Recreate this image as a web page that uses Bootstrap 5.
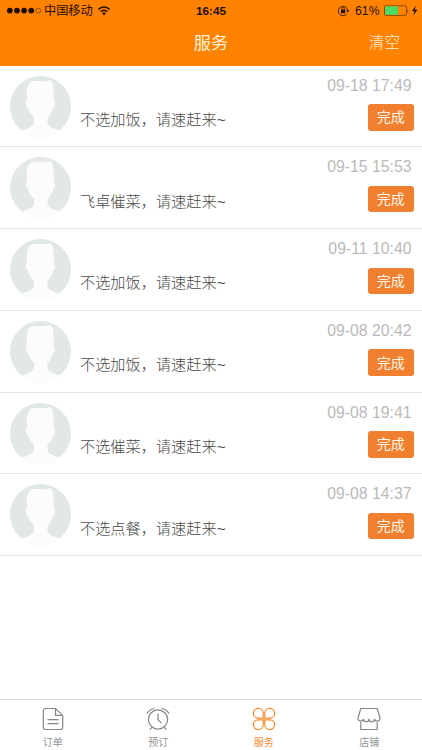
<!DOCTYPE html>
<html lang="zh-CN">
<head>
<meta charset="utf-8">
<meta name="viewport" content="width=device-width, initial-scale=1">
<title>服务</title>
<link href="https://cdn.jsdelivr.net/npm/bootstrap@5.3.0/dist/css/bootstrap.min.css" rel="stylesheet">
<style>
body{font-family:"Liberation Sans","Noto Sans CJK SC",sans-serif;height:750px;overflow:hidden;background:#fff}
svg{display:block;flex:none}
.top-area{background:#ff8200;height:65.5px}
.status-bar{height:22px;font-size:12.2px;line-height:22px;color:#1f0e00}
.status-bar>div{flex:1 1 0}
.clock{font-weight:700;font-size:11.8px}
.title-bar{height:43.5px;color:#fff3dc}
.title-bar>*{flex:1 1 0}
.page-title{font-size:17.2px;font-weight:400;line-height:43px}
.clear-link{font-size:15.6px;font-weight:300;color:#fff3dc;line-height:42px}
.clear-link span{margin-right:22px}
.notice{height:81.8px;padding:10px 8.5px 0 10.2px;border-bottom:1px solid #e6e6e6;border-radius:0}
.notice-text{font-size:15.2px;line-height:20px;font-weight:300;color:#484848;padding-top:34.4px;margin-left:8.800px}
.notice-time{font-size:15.8px;line-height:20px;color:#bababa;padding-right:2px;white-space:nowrap}
.done-btn{background:#f08030;color:#fff5e6;font-size:14px;line-height:20px;width:45.5px;height:26.5px;border-radius:3px;padding:2px 0;margin-top:8.5px;border:0}
.tab-bar{height:51px;border-top:1px solid #dcdcdc;font-size:10px;line-height:14px;color:#929292}
.tab-item{flex:1 1 0;padding-top:7px;color:#929292;text-decoration:none}
.tab-item.active{color:#f58a2c}
.tab-item span{margin-top:5px}
</style>
<script src="https://cdn.jsdelivr.net/npm/bootstrap@5.3.0/dist/js/bootstrap.bundle.min.js"></script>
</head>
<body class="d-flex flex-column">
<svg width="0" height="0" class="position-absolute" aria-hidden="true">
<defs>
<clipPath id="round"><circle cx="30.5" cy="30.5" r="30.5"/></clipPath>
<symbol id="person" viewBox="0 0 61 61">
<g clip-path="url(#round)">
<rect width="61" height="61" fill="#e1e8e6"/>
<path d="M17 21C16 14 18 6.500 22 5.300C28 4 34 6.500 40 4C43 6 43.500 9 43.500 14L44 26C46 26 45 31 43.300 32C42 37 39.500 39.500 37.500 41.500V47C38 51 42 51.500 49.500 54.700L56 62H6L12 54.700C19 51.500 23.500 51 24 47V41.500C21.500 39.500 19 36 18 32C16 31 15 26 16.500 25Z" fill="#fcfcfc"/>
</g>
</symbol>
</defs>
</svg>
<header class="top-area flex-shrink-0">
<div class="status-bar d-flex">
<div class="d-flex align-items-center">
<svg width="44" height="22" fill="#1f0e00"><circle cx="9.800" cy="10.600" r="2.900"/><circle cx="17" cy="10.600" r="2.900"/><circle cx="24.100" cy="10.600" r="2.900"/><circle cx="31.200" cy="10.600" r="2.900"/><circle cx="38.300" cy="10.600" r="2.500" fill="none" stroke="#6b3600" stroke-width=".7"/></svg>
<span>中国移动</span>
<svg width="14" height="22" viewBox="0 0 14 22" class="ms-1" fill="none" stroke="#1f0e00" stroke-width="1.700"><path d="M1.400 9.300a8 8 0 0 1 11.200 0M3.700 11.700a4.800 4.800 0 0 1 6.600 0"/><path d="M7 15.200L5 13.200a2.800 2.800 0 0 1 4 0z" fill="#1f0e00" stroke="none"/></svg>
</div>
<span class="clock">16:45</span>
<div class="d-flex align-items-center justify-content-end">
<svg width="14" height="22" viewBox="0 0 14 22" fill="none" stroke="#3a1c00"><path d="M9.400 14.300A4.700 4.700 0 1 1 10.700 10.500" stroke-width="1"/><path d="M9 10.200h3.500L10.800 12.500z" fill="#3a1c00" stroke="none"/><rect x="4" y="9.800" width="4.200" height="3.500" fill="#1f0e00" stroke="none"/><path d="M4.800 10V8.800a1.300 1.300 0 0 1 2.600 0V10" stroke-width=".8"/></svg>
<span class="ms-1">61%</span>
<svg width="42.500" height="22" viewBox="0 0 42.500 22"><rect x="4.500" y="5.800" width="22" height="9.600" rx="1.200" fill="none" stroke="#6b4200" stroke-width=".8"/><rect x="5.100" y="6.400" width="12.800" height="8.400" fill="#4cdb64"/><path d="M27.500 9.200q1.800 1.400 0 3z" fill="#3a1c00"/><path d="M35.700 5.800L32 11h2.400l-1.100 4.200L37.500 9.800h-2.600z" fill="#1f0e00"/></svg>
</div>
</div>
<nav class="title-bar d-flex">
<span></span>
<h1 class="page-title text-center m-0">服务</h1>
<a class="clear-link text-end text-decoration-none" href="#"><span>清空</span></a>
</nav>
</header>
<main class="flex-grow-1">
<div class="notice d-flex align-items-start"><svg width="61" height="61"><use href="#person"/></svg><div class="notice-text flex-grow-1">不选加饭，请速赶来~</div><div class="d-flex flex-column align-items-end"><time class="notice-time">09-18 17:49</time><button class="done-btn btn">完成</button></div></div>
<div class="notice d-flex align-items-start"><svg width="61" height="61"><use href="#person"/></svg><div class="notice-text flex-grow-1">飞卓催菜，请速赶来~</div><div class="d-flex flex-column align-items-end"><time class="notice-time">09-15 15:53</time><button class="done-btn btn">完成</button></div></div>
<div class="notice d-flex align-items-start"><svg width="61" height="61"><use href="#person"/></svg><div class="notice-text flex-grow-1">不选加饭，请速赶来~</div><div class="d-flex flex-column align-items-end"><time class="notice-time">09-11 10:40</time><button class="done-btn btn">完成</button></div></div>
<div class="notice d-flex align-items-start"><svg width="61" height="61"><use href="#person"/></svg><div class="notice-text flex-grow-1">不选加饭，请速赶来~</div><div class="d-flex flex-column align-items-end"><time class="notice-time">09-08 20:42</time><button class="done-btn btn">完成</button></div></div>
<div class="notice d-flex align-items-start"><svg width="61" height="61"><use href="#person"/></svg><div class="notice-text flex-grow-1">不选催菜，请速赶来~</div><div class="d-flex flex-column align-items-end"><time class="notice-time">09-08 19:41</time><button class="done-btn btn">完成</button></div></div>
<div class="notice d-flex align-items-start"><svg width="61" height="61"><use href="#person"/></svg><div class="notice-text flex-grow-1">不选点餐，请速赶来~</div><div class="d-flex flex-column align-items-end"><time class="notice-time">09-08 14:37</time><button class="done-btn btn">完成</button></div></div>
</main>
<nav class="tab-bar d-flex flex-shrink-0">
<a class="tab-item d-flex flex-column align-items-center" href="#"><svg width="24" height="24" viewBox="0 0 24 24" fill="none" stroke="#868686" stroke-width="1.200"><path d="M14.500 1.500H4.500a2.200 2.200 0 0 0-2.200 2.200v16.600a2.200 2.200 0 0 0 2.200 2.200h15a2.200 2.200 0 0 0 2.200-2.200V8.400zV8.400H21.700M6.500 12.700h11M6.500 16.700h11"/></svg><span>订单</span></a>
<a class="tab-item d-flex flex-column align-items-center" href="#"><svg width="24" height="24" viewBox="0 0 24 24" fill="none" stroke="#868686" stroke-width="1.200"><circle cx="12" cy="12.500" r="9.600"/><path d="M12 6.500v6.200l3.300 3.500M1 6.800Q3.300 2 8.500 1.500M15.500 1.500Q20.700 2 23 6.800M5.700 20.300L3.700 22.700M18.300 20.300l2 2.400"/></svg><span>预订</span></a>
<a class="tab-item active d-flex flex-column align-items-center" href="#"><svg width="24" height="24" viewBox="0 0 24 24" fill="none" stroke="#f58a2c" stroke-width="1.200"><path d="M11.200 11.200H6a4.900 4.900 0 1 1 5.200-4.900zM12.800 11.200V6.300A4.900 4.900 0 1 1 18 11.200zM11.200 12.800v4.900A4.900 4.900 0 1 1 6 12.800zM12.800 12.800h5.200a4.900 4.900 0 1 1-5.200 4.900z"/></svg><span>服务</span></a>
<a class="tab-item d-flex flex-column align-items-center" href="#"><svg width="24" height="24" viewBox="0 0 24 24" fill="none" stroke="#868686" stroke-width="1.200"><path d="M3.800 1.500H20.200L22.900 10.500a2.700 2.700 0 0 1-5.400 1.500a2.750 2.750 0 0 1-5.500 0a2.750 2.750 0 0 1-5.500 0a2.700 2.700 0 0 1-5.400-1.500zM3.800 15.300v7.200H20.200v-7.200"/></svg><span>店铺</span></a>
</nav>
</body>
</html>
